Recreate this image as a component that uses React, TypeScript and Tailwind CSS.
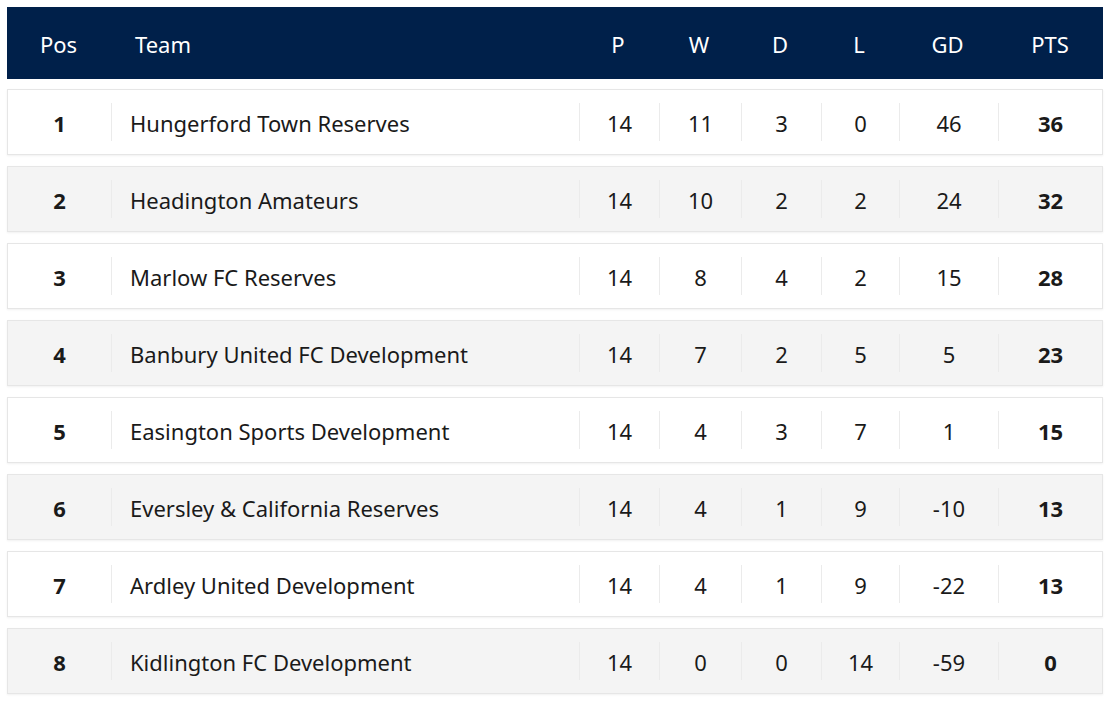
import React from "react";

const rows: [number, string, number, number, number, number, number, number][] = [
  [1, "Hungerford Town Reserves", 14, 11, 3, 0, 46, 36],
  [2, "Headington Amateurs", 14, 10, 2, 2, 24, 32],
  [3, "Marlow FC Reserves", 14, 8, 4, 2, 15, 28],
  [4, "Banbury United FC Development", 14, 7, 2, 5, 5, 23],
  [5, "Easington Sports Development", 14, 4, 3, 7, 1, 15],
  [6, "Eversley & California Reserves", 14, 4, 1, 9, -10, 13],
  [7, "Ardley United Development", 14, 4, 1, 9, -22, 13],
  [8, "Kidlington FC Development", 14, 0, 0, 14, -59, 0],
];

const widths = ["w-[103px]", "w-[468px]", "w-[80px]", "w-[82px]", "w-[80px]", "w-[78px]", "w-[99px]", "flex-1"];

export default function App() {
  return (
    <div
      className="bg-white w-[1110px] h-[710px] px-[7px] pt-[7px] text-[22px]"
      style={{ fontFamily: '"Noto Sans", "Open Sans", sans-serif' }}
    >
      <div className="h-[72px] bg-[#00204a] text-white flex items-center pt-[3px]">
        <div className={`${widths[0]} text-center`}>Pos</div>
        <div className={`${widths[1]} pl-[25px]`}>Team</div>
        {["P", "W", "D", "L", "GD", "PTS"].map((h, i) => (
          <div key={h} className={`${widths[i + 2]} text-center`}>
            {h}
          </div>
        ))}
      </div>
      <div className="mt-[10px] flex flex-col gap-[11px]">
        {rows.map((r, idx) => (
          <div
            key={r[0]}
            className={`h-[66px] flex items-center border border-[#e6e6e6] shadow-[0_1px_2px_rgba(0,0,0,0.06)] text-[#1a1a1a] ${
              idx % 2 === 0 ? "bg-white" : "bg-[#f4f4f4]"
            }`}
          >
            <div className={`${widths[0]} text-center font-bold pt-[2px]`}>{r[0]}</div>
            <div className={`${widths[1]} h-[38px] flex items-center pl-[18px] pt-[2px] border-l border-[#ebebeb]`}>{r[1]}</div>
            {r.slice(2).map((v, i) => (
              <div
                key={i}
                className={`${widths[i + 2]} h-[38px] flex items-center justify-center pt-[2px] border-l border-[#ebebeb] ${
                  i === 5 ? "font-bold" : ""
                }`}
              >
                {v}
              </div>
            ))}
          </div>
        ))}
      </div>
    </div>
  );
}
